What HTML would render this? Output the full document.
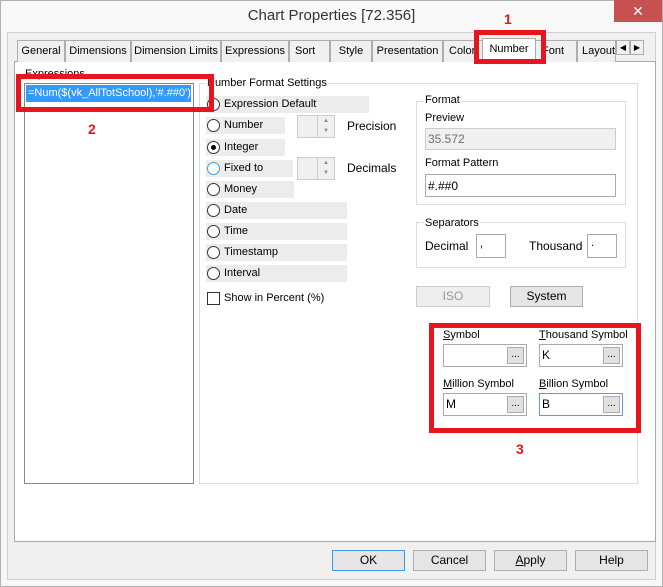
<!DOCTYPE html>
<html><head><meta charset="utf-8"><style>
*{margin:0;padding:0;box-sizing:border-box}
body{width:663px;height:587px;overflow:hidden;background:#f8f8f8;font-family:"Liberation Sans",sans-serif;font-size:11px;color:#000;position:relative}
.a{position:absolute}
.t{position:absolute;white-space:nowrap;font-size:11px}
.tab{position:absolute;top:40px;height:22px;border:1px solid #adadad;border-bottom:none;background:#f0f0f0;text-align:center;line-height:20px;font-size:11px}
.row{position:absolute;left:206px;height:17px;background:#ececec}
.rad{position:absolute;width:13px;height:13px;border:1px solid #333;border-radius:50%;background:#fff}
.box{position:absolute;border:1px solid #aaa;background:#fff}
.btn{position:absolute;border:1px solid #adadad;background:#e5e5e5;text-align:center;font-size:12px}
.red{position:absolute;border:5px solid #e8141e}
.dots{position:absolute;right:2px;top:2px;width:17px;height:17px;border:1px solid #adadad;background:#e1e1e1;font-size:10px;text-align:center;line-height:14px}
.grp{position:absolute;border:1px solid #dcdcdc}
.leg{position:absolute;background:#fff;padding:0 1px;font-size:11px}
</style></head><body>
<div class="a" style="left:0;top:0;width:663px;height:587px;border:1px solid #b0b0b0"></div>
<div class="t" style="left:0;width:663px;text-align:center;top:7px;font-size:15px;color:#333">Chart Properties [72.356]</div>
<div class="a" style="left:614px;top:0;width:48px;height:22px;background:#c75050;color:#fff;text-align:center;font-size:14px;line-height:22px">✕</div>
<div class="a" style="left:7px;top:32px;width:649px;height:548px;background:#f0f0f0;border:1px solid #cfcfcf"></div>
<!-- tab page -->
<div class="a" style="left:14px;top:61px;width:642px;height:481px;background:#fff;border:1px solid #a8a8a8"></div>
<div class="tab" style="left:17px;width:48px">General</div>
<div class="tab" style="left:65px;width:66px">Dimensions</div>
<div class="tab" style="left:131px;width:90px">Dimension Limits</div>
<div class="tab" style="left:221px;width:68px">Expressions</div>
<div class="tab" style="left:289px;width:41px;text-align:left;padding-left:5px">Sort</div>
<div class="tab" style="left:330px;width:42px">Style</div>
<div class="tab" style="left:372px;width:71px">Presentation</div>
<div class="tab" style="left:443px;width:40px;text-align:left;padding-left:5px">Color</div>
<div class="tab" style="left:535px;width:42px;text-align:left;padding-left:6px">Font</div>
<div class="tab" style="left:577px;width:39px;text-align:left;padding-left:4px">Layout</div>
<div class="tab" style="left:482px;width:54px;top:38px;height:25px;background:#fff;line-height:20px;border-color:#aaa">Number</div>
<div class="a" style="left:616px;top:40px;width:14px;height:15px;border:1px solid #adadad;background:#f0f0f0;font-size:8px;text-align:center;line-height:13px">◀</div>
<div class="a" style="left:630px;top:40px;width:14px;height:15px;border:1px solid #adadad;background:#f0f0f0;font-size:8px;text-align:center;line-height:13px">▶</div>
<!-- expressions -->
<div class="t" style="left:25px;top:68px">Expressions</div>
<div class="a" style="left:24px;top:83px;width:170px;height:401px;border:1px solid #828790;background:#fff"></div>
<div class="a" style="left:26px;top:85px;width:165px;height:17px;background:#3399ff"></div>
<div class="t" style="left:28px;top:87px;color:#fff">=Num($(vk_AllTotSchool),'#.##0')</div>
<!-- number panel -->
<div class="a" style="left:199px;top:83px;width:439px;height:401px;border:1px solid #dcdcdc;border-right-color:#dcdcdc"></div>
<div class="leg" style="left:206px;top:77px">Number Format Settings</div>
<div class="row" style="top:96px;width:163px"></div>
<div class="row" style="top:117px;width:79px"></div>
<div class="row" style="top:139px;width:79px"></div>
<div class="row" style="top:160px;width:87px"></div>
<div class="row" style="top:181px;width:88px"></div>
<div class="row" style="top:202px;width:141px"></div>
<div class="row" style="top:223px;width:141px"></div>
<div class="row" style="top:244px;width:141px"></div>
<div class="row" style="top:265px;width:141px"></div>
<div class="rad" style="left:207px;top:98px"></div><div class="t" style="left:224px;top:98px">Expression Default</div>
<div class="rad" style="left:207px;top:119px"></div><div class="t" style="left:224px;top:119px">Number</div>
<div class="rad" style="left:207px;top:141px"></div><div class="a" style="left:211px;top:145px;width:5px;height:5px;border-radius:50%;background:#000"></div><div class="t" style="left:224px;top:141px">Integer</div>
<div class="rad" style="left:207px;top:162px;border-color:#3c9be8"></div><div class="t" style="left:224px;top:162px">Fixed to</div>
<div class="rad" style="left:207px;top:183px"></div><div class="t" style="left:224px;top:183px">Money</div>
<div class="rad" style="left:207px;top:204px"></div><div class="t" style="left:224px;top:204px">Date</div>
<div class="rad" style="left:207px;top:225px"></div><div class="t" style="left:224px;top:225px">Time</div>
<div class="rad" style="left:207px;top:246px"></div><div class="t" style="left:224px;top:246px">Timestamp</div>
<div class="rad" style="left:207px;top:267px"></div><div class="t" style="left:224px;top:267px">Interval</div>
<div class="a" style="left:207px;top:292px;width:13px;height:13px;border:1px solid #333;background:#fff"></div><div class="t" style="left:224px;top:292px">Show in Percent (%)</div>
<div class="a" style="left:297px;top:115px;width:38px;height:23px;border:1px solid #ccc;background:#f0f0f0"></div>
<div class="a" style="left:317px;top:116px;width:17px;height:21px;border-left:1px solid #ccc;font-size:6px;color:#888;text-align:center;line-height:10px">▲<br>▼</div>
<div class="a" style="left:297px;top:157px;width:38px;height:23px;border:1px solid #ccc;background:#f0f0f0"></div>
<div class="a" style="left:317px;top:158px;width:17px;height:21px;border-left:1px solid #ccc;font-size:6px;color:#888;text-align:center;line-height:10px">▲<br>▼</div>
<div class="t" style="left:347px;top:119px;font-size:12px">Precision</div>
<div class="t" style="left:347px;top:161px;font-size:12px">Decimals</div>
<!-- format -->
<div class="grp" style="left:416px;top:101px;width:210px;height:104px"></div>
<div class="leg" style="left:424px;top:94px">Format</div>
<div class="t" style="left:425px;top:112px">Preview</div>
<div class="a" style="left:425px;top:128px;width:191px;height:22px;border:1px solid #ccc;background:#f0f0f0"></div>
<div class="t" style="left:428px;top:132px;color:#6d6d6d;font-size:12px">35.572</div>
<div class="t" style="left:425px;top:157px">Format Pattern</div>
<div class="box" style="left:425px;top:174px;width:191px;height:23px"></div>
<div class="t" style="left:428px;top:179px;font-size:12px">#.##0</div>
<div class="grp" style="left:416px;top:222px;width:210px;height:46px"></div>
<div class="leg" style="left:424px;top:217px">Separators</div>
<div class="t" style="left:425px;top:239px;font-size:12px">Decimal</div>
<div class="box" style="left:476px;top:234px;width:30px;height:24px"></div>
<div class="t" style="left:480px;top:238px">,</div>
<div class="t" style="left:529px;top:239px;font-size:12px">Thousand</div>
<div class="box" style="left:587px;top:234px;width:30px;height:24px"></div>
<div class="t" style="left:591px;top:237px">.</div>
<div class="btn" style="left:416px;top:286px;width:74px;height:21px;color:#999;background:#eee;border-color:#ccc;line-height:19px">ISO</div>
<div class="btn" style="left:510px;top:286px;width:73px;height:21px;line-height:19px">System</div>
<!-- symbols -->
<div class="t" style="left:443px;top:329px"><u>S</u>ymbol</div>
<div class="box" style="left:443px;top:344px;width:84px;height:23px"><div class="dots">...</div></div>
<div class="t" style="left:539px;top:329px"><u>T</u>housand Symbol</div>
<div class="box" style="left:539px;top:344px;width:84px;height:23px"><div class="dots">...</div></div>
<div class="t" style="left:542px;top:348px;font-size:12px">K</div>
<div class="t" style="left:443px;top:378px"><u>M</u>illion Symbol</div>
<div class="box" style="left:443px;top:393px;width:84px;height:23px"><div class="dots">...</div></div>
<div class="t" style="left:446px;top:397px;font-size:12px">M</div>
<div class="t" style="left:539px;top:378px"><u>B</u>illion Symbol</div>
<div class="box" style="left:539px;top:393px;width:84px;height:23px;border-color:#569de5"><div class="dots">...</div></div>
<div class="t" style="left:542px;top:397px;font-size:12px">B</div>
<!-- bottom buttons -->
<div class="btn" style="left:332px;top:550px;width:73px;height:21px;border-color:#3c9be8;line-height:19px">OK</div>
<div class="btn" style="left:413px;top:550px;width:73px;height:21px;line-height:19px">Cancel</div>
<div class="btn" style="left:494px;top:550px;width:73px;height:21px;line-height:19px"><u>A</u>pply</div>
<div class="btn" style="left:575px;top:550px;width:73px;height:21px;line-height:19px">Help</div>
<!-- annotations -->
<div class="red" style="left:474px;top:30px;width:72px;height:34px"></div>
<div class="red" style="left:16px;top:74px;width:198px;height:38px"></div>
<div class="red" style="left:429px;top:323px;width:212px;height:110px"></div>
<div class="t" style="left:504px;top:11px;color:#e8141e;font-weight:bold;font-size:14px">1</div>
<div class="t" style="left:88px;top:121px;color:#e8141e;font-weight:bold;font-size:14px">2</div>
<div class="t" style="left:516px;top:441px;color:#e8141e;font-weight:bold;font-size:14px">3</div>
</body></html>
